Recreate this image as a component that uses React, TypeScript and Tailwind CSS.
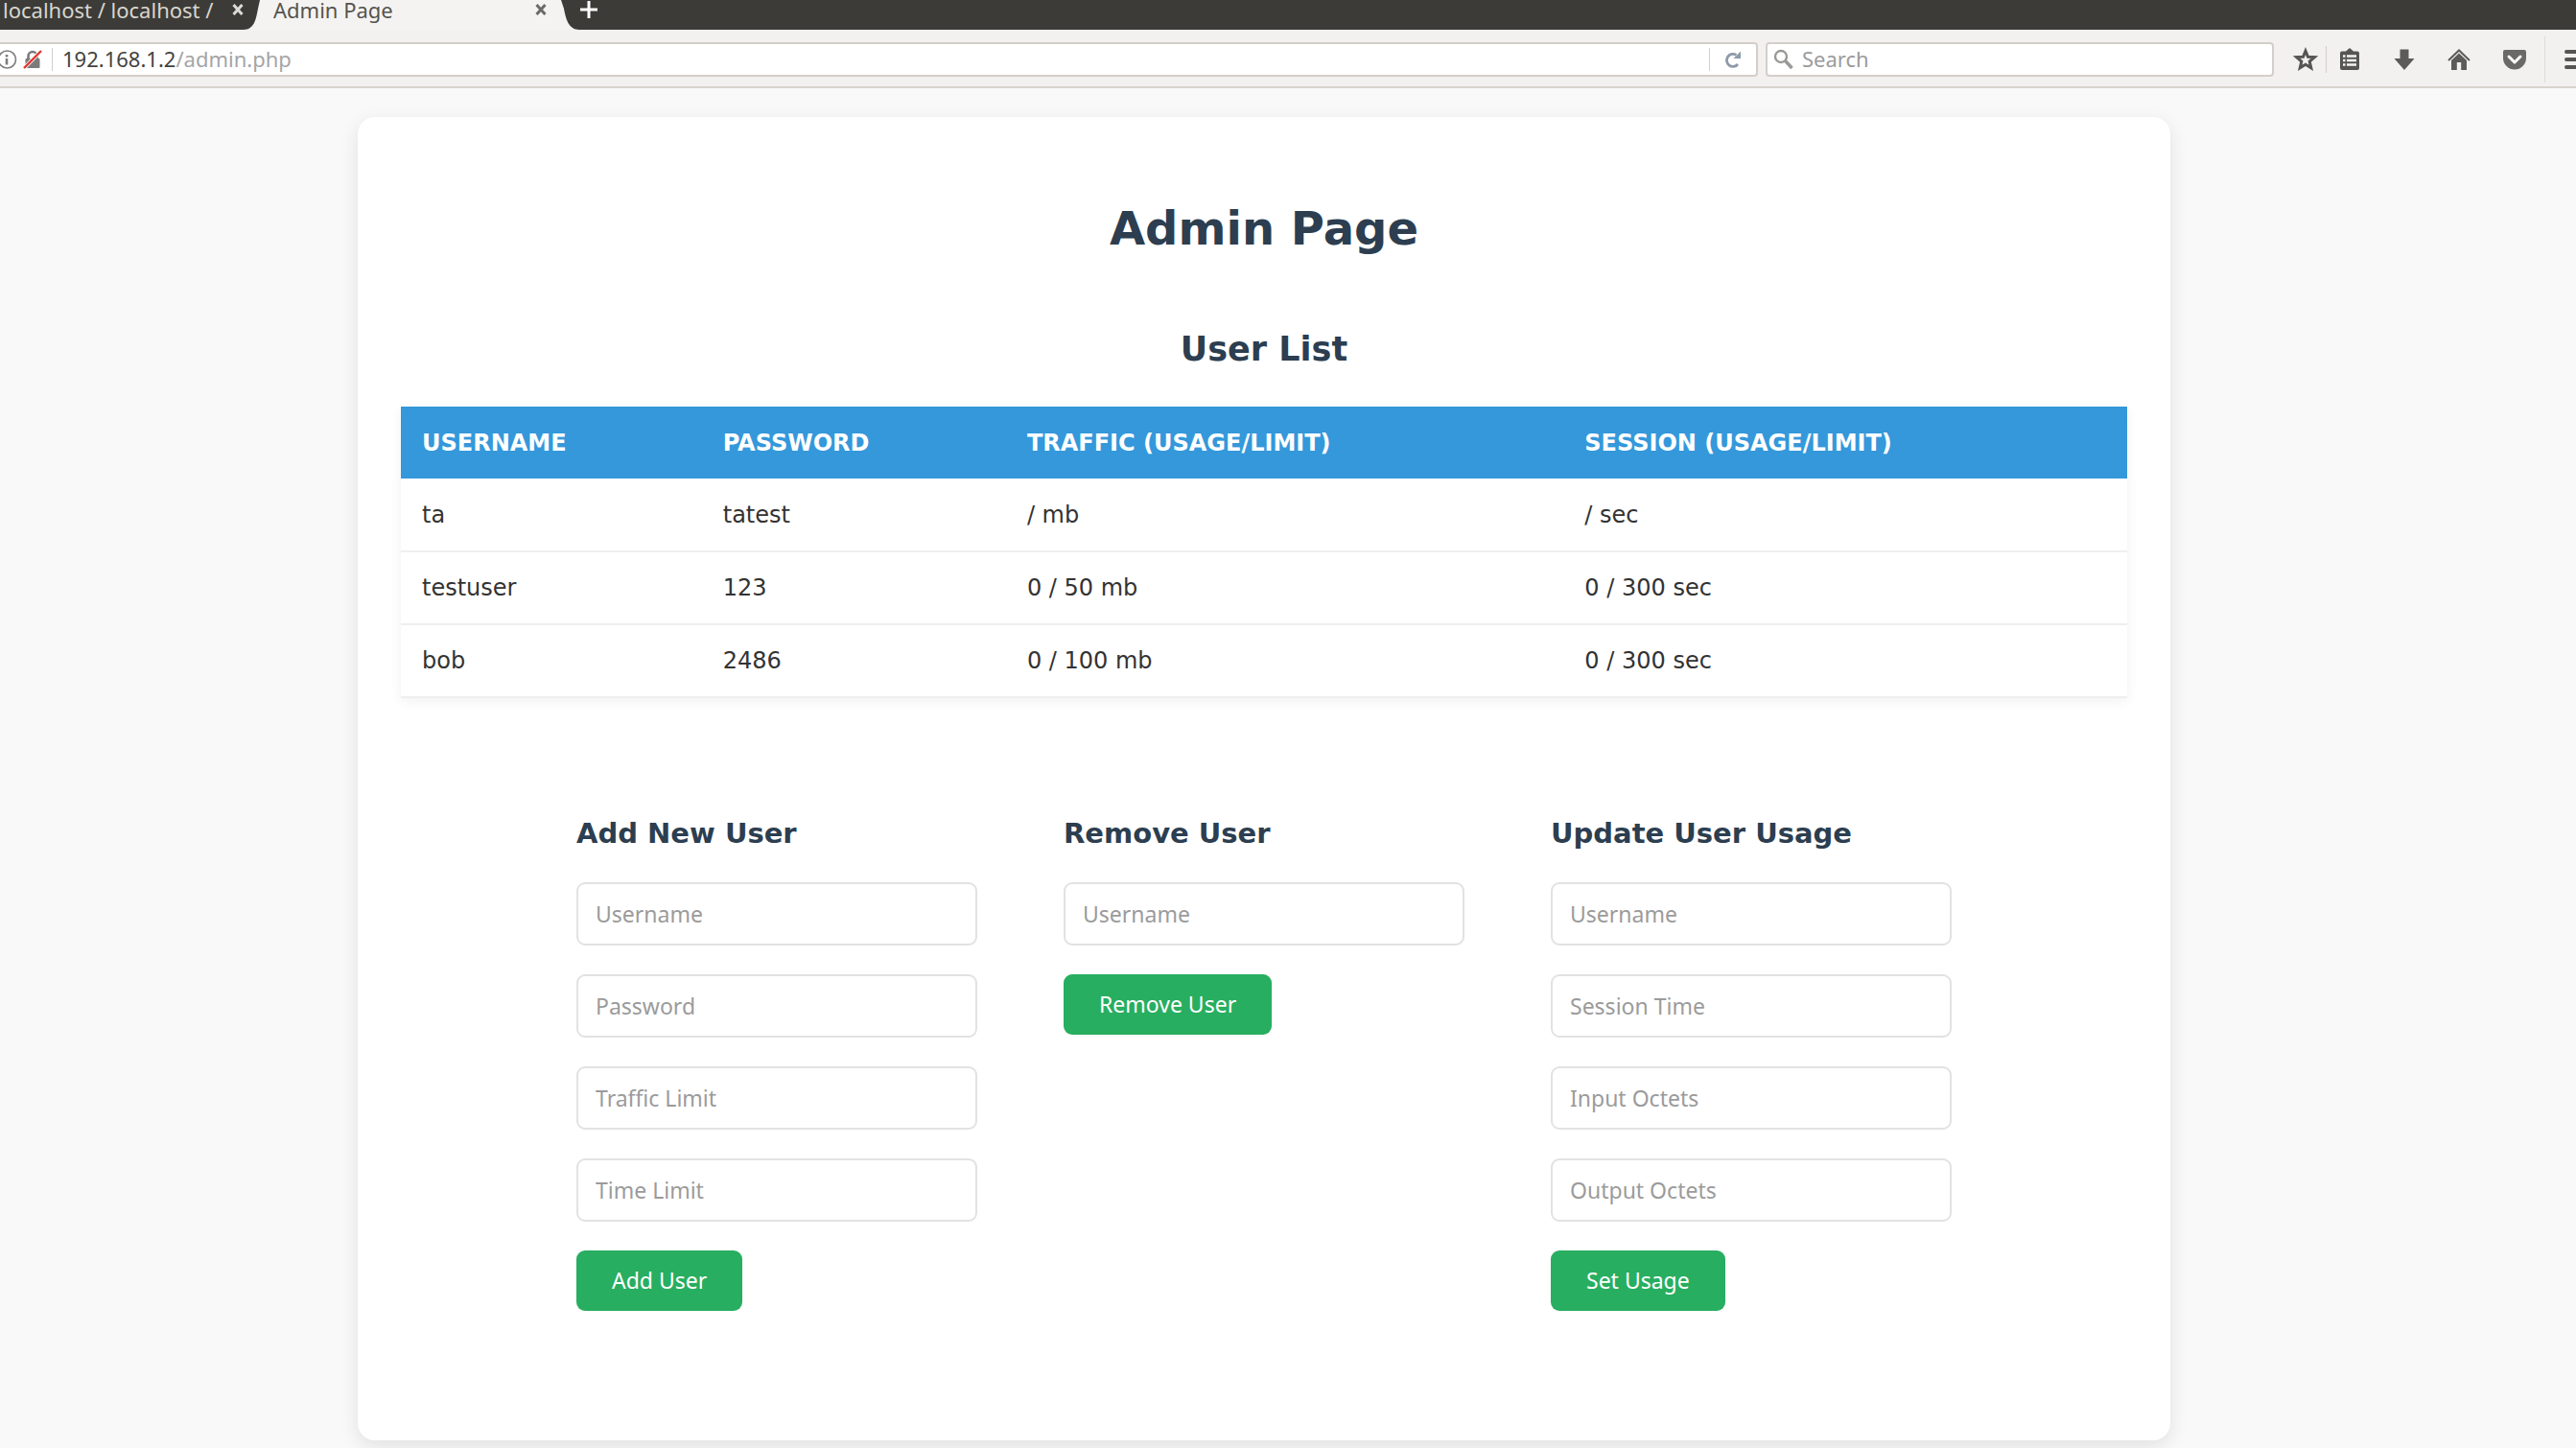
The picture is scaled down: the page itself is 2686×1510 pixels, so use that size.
import React from "react";

const users = [
  { name: "ta", password: "tatest", traffic: "/ mb", session: "/ sec" },
  { name: "testuser", password: "123", traffic: "0 / 50 mb", session: "0 / 300 sec" },
  { name: "bob", password: "2486", traffic: "0 / 100 mb", session: "0 / 300 sec" },
];

const forms = [
  { title: "Add New User", fields: ["Username", "Password", "Traffic Limit", "Time Limit"], action: "Add User" },
  { title: "Remove User", fields: ["Username"], action: "Remove User" },
  { title: "Update User Usage", fields: ["Username", "Session Time", "Input Octets", "Output Octets"], action: "Set Usage" },
];

function CloseIcon() {
  return (
    <svg viewBox="0 0 12 12" className="size-3" fill="none" stroke="currentColor" strokeWidth="3">
      <path d="M1.5 1 10.5 11M10.5 1 1.5 11" />
    </svg>
  );
}

function TabBar() {
  return (
    <div className="flex h-[31px] items-stretch bg-[#3c3b37] text-[22px] leading-5">
      <div className="flex w-[254px] items-start justify-between pl-[3px] text-[#d8d6d0]">
        <span className="whitespace-nowrap">localhost / localhost /</span>
        <button aria-label="Close localhost tab" className="mt-1 text-[#dddbd6]">
          <CloseIcon />
        </button>
      </div>
      <svg viewBox="0 0 20 31" className="h-[31px] w-5 shrink-0">
        <path d="M0 31C11 31 13 20 15 9L17 0H20V31Z" fill="#f4f3f2" />
      </svg>
      <div className="flex w-[308px] items-start justify-between bg-[#f4f3f2] pr-3 pl-[11px] text-[#55544f]">
        <span>Admin Page</span>
        <button aria-label="Close Admin Page tab" className="mt-1 text-[#6b6a68]">
          <CloseIcon />
        </button>
      </div>
      <svg viewBox="0 0 22 31" className="h-[31px] w-[22px] shrink-0">
        <path d="M22 31C11 31 8 20 6 9L3 0H0V31Z" fill="#f4f3f2" />
      </svg>
      <button aria-label="New tab" className="flex h-5 w-5 items-center text-white">
        <svg viewBox="0 0 20 20" className="size-5" fill="none" stroke="currentColor" strokeWidth="3">
          <path d="M10 1V19M1 10H19" />
        </svg>
      </button>
    </div>
  );
}

function InfoIcon() {
  return (
    <svg viewBox="0 0 18 20" className="h-5 w-[18px]" fill="none" stroke="#7d7c7a" strokeWidth="1.6">
      <circle cx="7.5" cy="10" r="9" />
      <path d="M7 5V7.5M7 9V15.5" strokeWidth="2.6" />
    </svg>
  );
}

function BlockedLockIcon() {
  return (
    <svg viewBox="0 0 20 20" className="size-5">
      <path d="M5.5 10V6.5a4.5 4.5 0 0 1 9 0V10" fill="none" stroke="#7b7b7b" strokeWidth="2.6" />
      <rect x="2.5" y="9" width="15" height="10" rx="1" fill="#7b7b7b" />
      <path d="M1 19 19 1" stroke="#fff" strokeWidth="4" />
      <path d="M1 19 19 1" stroke="#e0352f" strokeWidth="2.4" />
    </svg>
  );
}

function Toolbar() {
  return (
    <div className="flex h-[61px] items-center border-b-2 border-[#d9d3ce] bg-[#f2f1ef] pt-0.5 text-[22px]">
      <div className="flex h-9 flex-1 items-center rounded-r border-2 border-l-0 border-[#d4ceca] bg-white">
        <InfoIcon />
        <span className="ml-1.5">
          <BlockedLockIcon />
        </span>
        <span className="mx-2.5 h-6 w-px bg-[#cfcfcf]" />
        <span className="flex-1 whitespace-nowrap text-[#a5a5a5]">
          <span className="text-[#44433f]">192.168.1.2</span>/admin.php
        </span>
        <span className="h-6 w-px bg-[#cfcfcf]" />
        <button aria-label="Reload" className="flex w-12 justify-center">
          <svg viewBox="0 0 18 18" className="size-[18px]">
            <path d="M14 14a6.5 6.5 0 1 1-1.5-9.6" fill="none" stroke="#8d9aa8" strokeWidth="2.8" />
            <path d="M17 .5V8H9.5Z" fill="#8d9aa8" />
          </svg>
        </button>
      </div>
      <label className="ml-2 flex h-9 w-[530px] items-center rounded border-2 border-[#d4ceca] bg-white">
        <svg viewBox="0 0 22 22" className="ml-1.5 size-[22px] shrink-0" fill="none" stroke="#9a9996">
          <circle cx="8" cy="8" r="6" strokeWidth="2.4" />
          <path d="M12.5 12.5 19.5 20" strokeWidth="3.4" />
        </svg>
        <input aria-label="Search" placeholder="Search" className="ml-2 min-w-0 flex-1 outline-none placeholder:text-[#9b9b9b]" />
      </label>
      <div className="ml-5 flex items-center">
        <button aria-label="Bookmark this page">
          <svg viewBox="0 0 26 26" className="size-[26px]" fill="none" stroke="#555" strokeWidth="3">
            <path d="M13 4 15.500 10.200 22.300 10.600 17.200 15 18.800 21.800 13 18.200 7.200 21.800 8.800 15 3.700 10.600 10.500 10.200Z" />
          </svg>
        </button>
        <span className="ml-2 h-7 w-px bg-[#d3cfcb]" />
        <button aria-label="Bookmarks menu" className="ml-3">
          <svg viewBox="0 0 24 24" className="size-6">
            <path d="M12 0 16 3.500H20a2 2 0 0 1 2 2V21a2 2 0 0 1-2 2H4a2 2 0 0 1-2-2V5.500a2 2 0 0 1 2-2H8Z" fill="#555" />
            <path d="M5 8.500H7.500M9 8.500H19M5 13H7.500M9 13H19M5 17.500H7.500M9 17.500H19" stroke="#f4f3f2" strokeWidth="2.500" />
          </svg>
        </button>
        <button aria-label="Downloads" className="ml-[33px]">
          <svg viewBox="0 0 24 24" className="size-6">
            <path d="M7.500 1.500H16.500V11H22.500L12 23 1.500 11H7.500Z" fill="#5c5b59" />
          </svg>
        </button>
        <button aria-label="Home" className="ml-[33px]">
          <svg viewBox="0 0 24 24" className="size-6">
            <path d="M1 13 12 2.500 23 13" fill="none" stroke="#5c5b59" strokeWidth="2" />
            <path d="M12 5.500 20 13V23H14.200V15H9.800V23H4V13Z" fill="#5c5b59" />
          </svg>
        </button>
        <button aria-label="Save to Pocket" className="ml-[33px]">
          <svg viewBox="0 0 26 24" className="h-6 w-[26px]">
            <path d="M3 2H23a2 2 0 0 1 2 2V10.500a12 12 0 0 1-24 0V4a2 2 0 0 1 2-2Z" fill="#6a6967" />
            <path d="M7 9 13 15 19 9" fill="none" stroke="#fff" strokeWidth="3" strokeLinecap="round" strokeLinejoin="round" />
          </svg>
        </button>
        <span className="ml-[18px] h-12 w-px bg-[#dedbd8]" />
        <button aria-label="Open menu" className="ml-5">
          <svg viewBox="0 0 12 22" className="h-[22px] w-3" stroke="#555" strokeWidth="4" strokeLinecap="round">
            <path d="M2 3H20M2 11H20M2 19H20" />
          </svg>
        </button>
      </div>
    </div>
  );
}

function UserTable() {
  return (
    <table className="mt-[38px] w-full border-collapse text-left text-2xl text-[#333] shadow-[0_3px_12px_rgba(0,0,0,0.06)]">
      <thead className="bg-[#3498db] text-white uppercase">
        <tr className="h-[75px]">
          <th className="px-[22px]">Username</th>
          <th className="px-[22px]">Password</th>
          <th className="px-[22px]">Traffic (Usage/Limit)</th>
          <th className="px-[22px]">Session (Usage/Limit)</th>
        </tr>
      </thead>
      <tbody>
        {users.map((u) => (
          <tr key={u.name} className="h-[76px] border-b-2 border-[#efefef]">
            <td className="px-[22px]">{u.name}</td>
            <td className="px-[22px]">{u.password}</td>
            <td className="px-[22px]">{u.traffic}</td>
            <td className="px-[22px]">{u.session}</td>
          </tr>
        ))}
      </tbody>
    </table>
  );
}

function UserForm({ title, fields, action }: { title: string; fields: string[]; action: string }) {
  return (
    <form className="flex flex-col items-start gap-[30px]" onSubmit={(e) => e.preventDefault()}>
      <h3 className="pb-[3px] text-[29px] leading-9 font-bold text-[#2c3e50]">{title}</h3>
      {fields.map((f) => (
        <input
          key={f}
          aria-label={f}
          placeholder={f}
          className="h-[66px] w-full rounded-[9px] border-2 border-[#e2e2e2] bg-white px-[18px] font-['Noto_Sans',sans-serif] text-[23px] placeholder:text-[#9b9b9b]"
        />
      ))}
      <button type="submit" className="h-[63px] rounded-[9px] bg-[#27ae60] px-[37px] font-['Noto_Sans',sans-serif] text-[23px] text-white">
        {action}
      </button>
    </form>
  );
}

export default function App() {
  return (
    <div className="flex min-h-screen flex-col bg-[#f9f9f9] font-['Noto_Sans',sans-serif]">
      <TabBar />
      <Toolbar />
      <main className="pt-[30px] pr-[50px] pb-2 font-['DejaVu_Sans',sans-serif]">
        <div className="mx-auto max-w-[1890px] rounded-[18px] bg-white px-[45px] pt-[87px] pb-[135px] shadow-[0_6px_20px_rgba(0,0,0,0.1)]">
          <h1 className="text-center text-5xl leading-[58px] font-bold text-[#2c3e50]">Admin Page</h1>
          <h2 className="mt-[75px] text-center text-[35px] leading-[44px] font-bold text-[#2c3e50]">User List</h2>
          <UserTable />
          <div className="mx-auto mt-[123px] grid max-w-[1434px] grid-cols-3 gap-[90px]">
            {forms.map((f) => (
              <UserForm key={f.title} {...f} />
            ))}
          </div>
        </div>
      </main>
    </div>
  );
}
